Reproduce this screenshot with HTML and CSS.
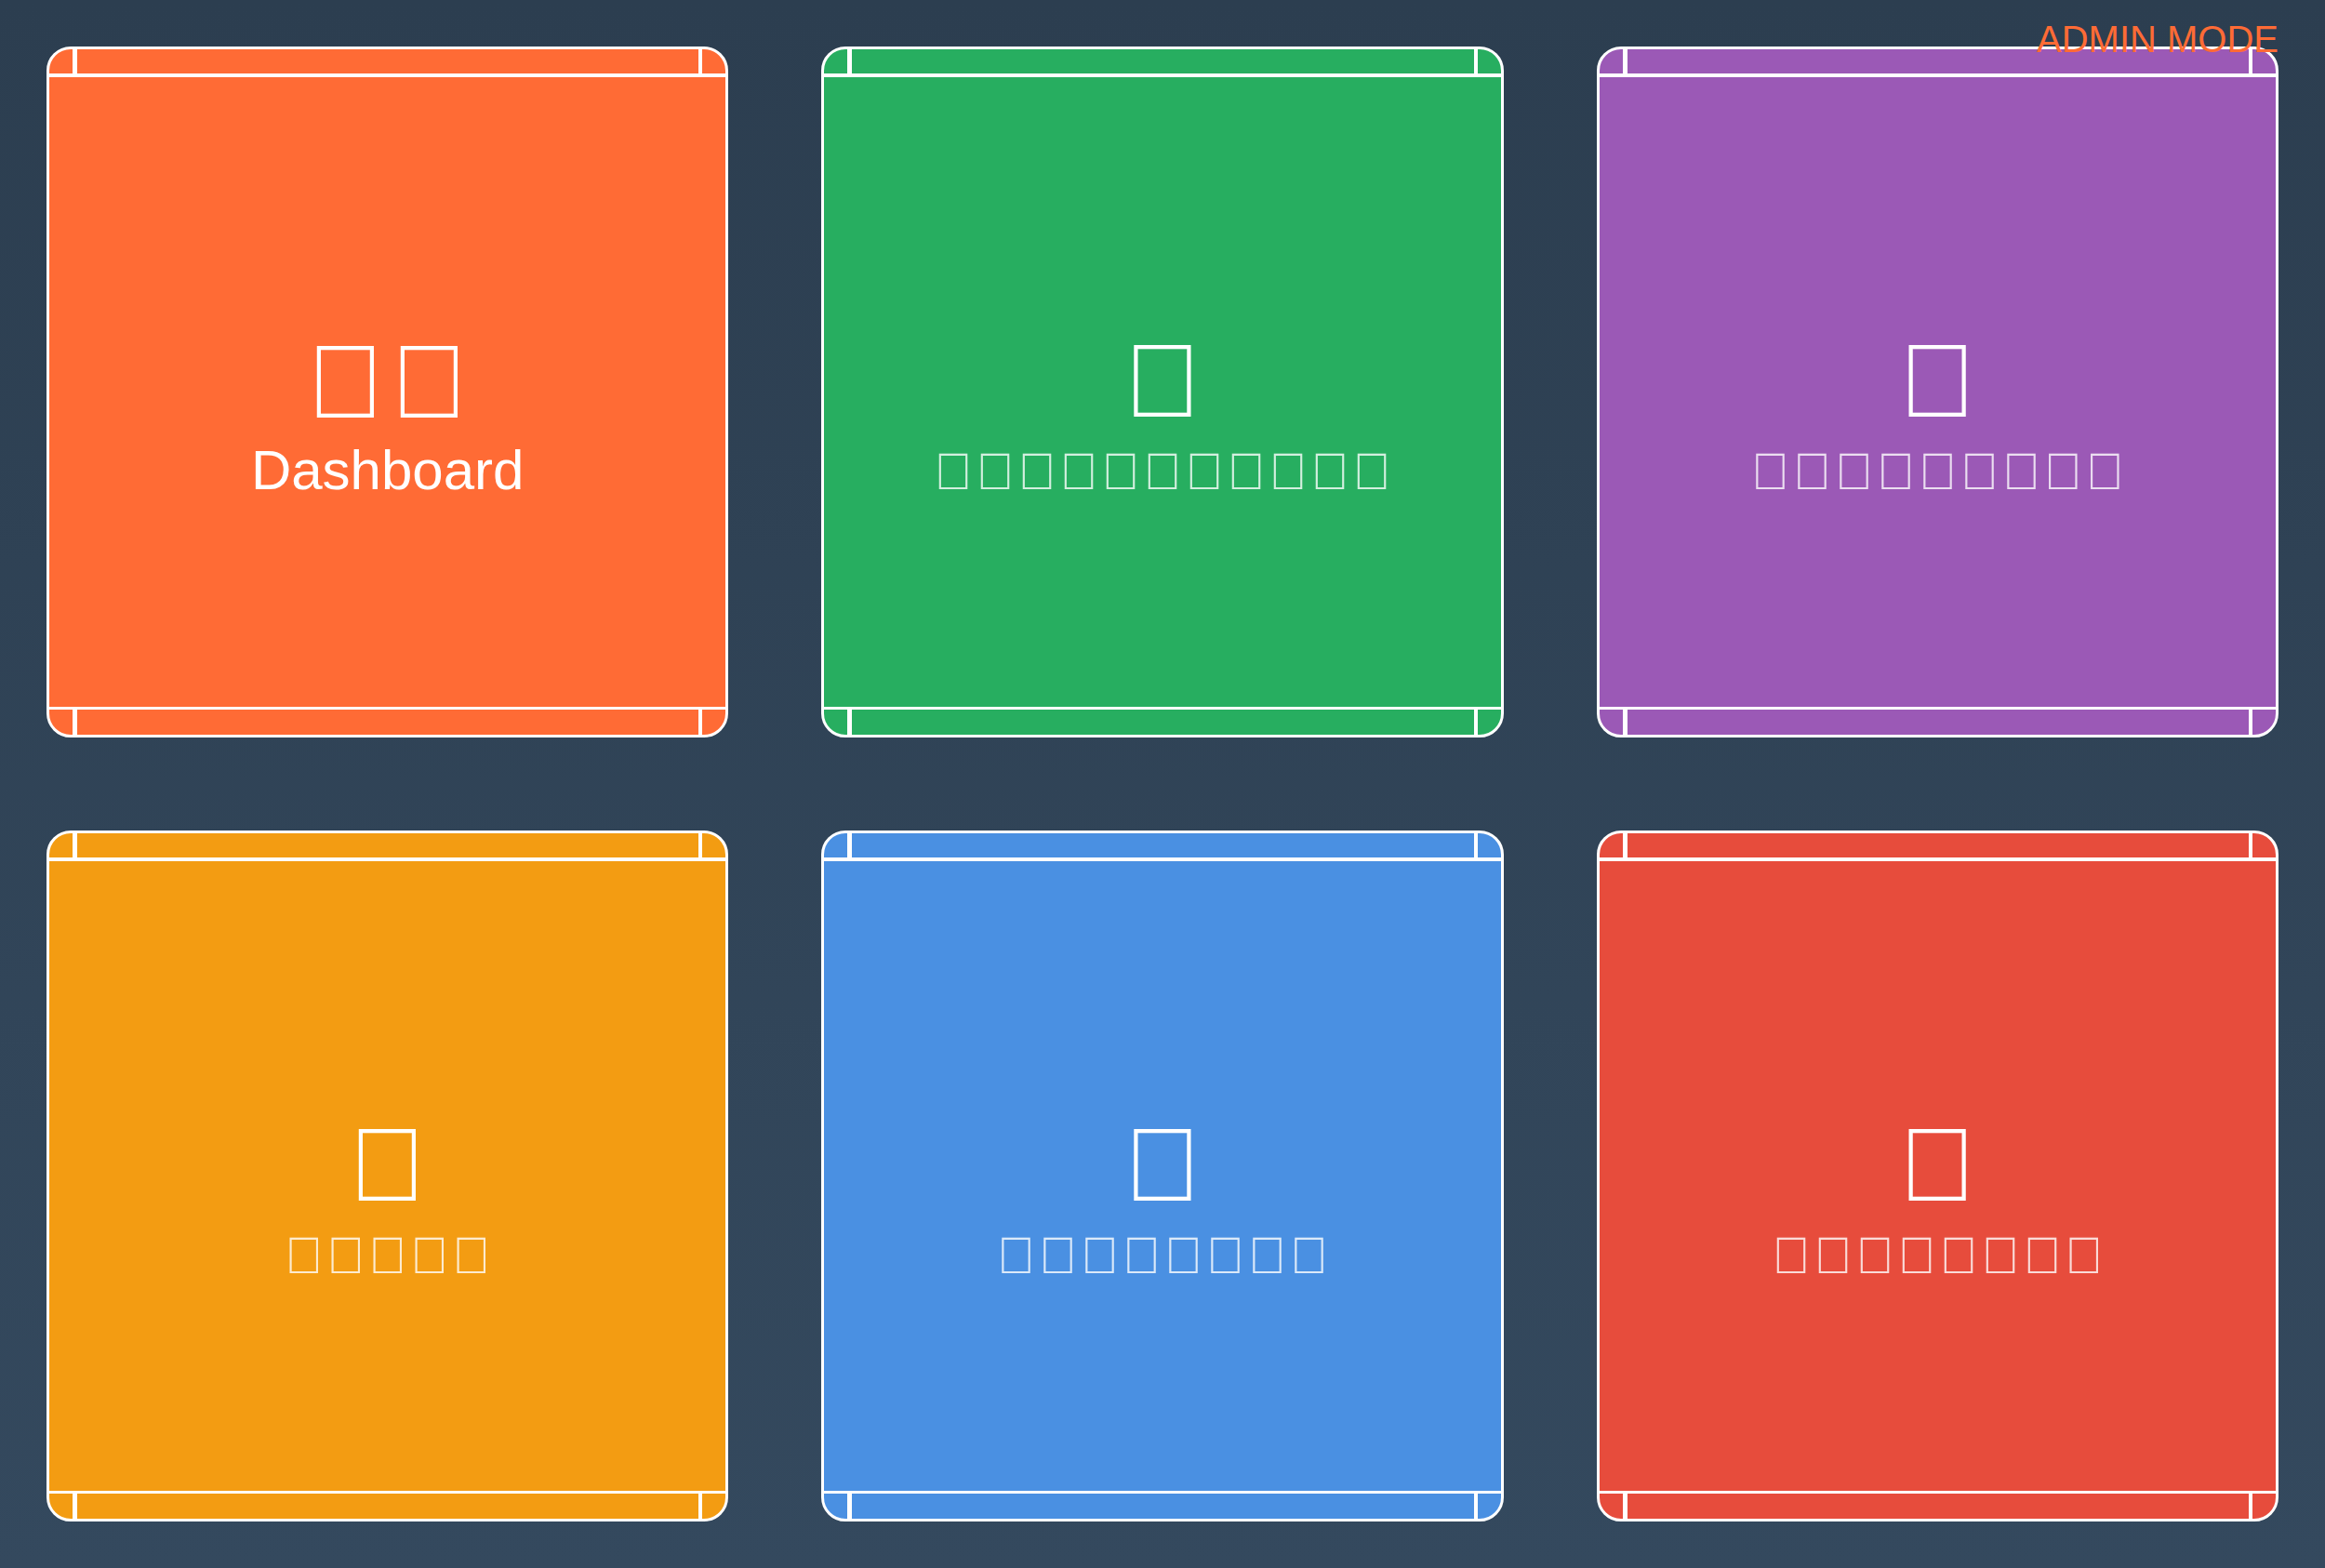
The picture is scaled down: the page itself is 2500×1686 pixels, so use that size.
FILE: index.html
```html
<!DOCTYPE html>
<html lang="en">
<head>
<meta charset="utf-8">
<title>Admin Tiles</title>
<link rel="stylesheet" href="styles.css">
</head>
<body>
<div class="board">
  <div class="tile tile-orange">
    <div class="strip strip-top"><span class="corner corner-l"></span><span class="strip-mid"></span><span class="corner corner-r"></span></div>
    <div class="tile-body"><div class="tile-icon">&#xF0E4;&#xF080;</div><div class="tile-label">Dashboard</div></div>
    <div class="strip strip-bottom"><span class="corner corner-l"></span><span class="strip-mid"></span><span class="corner corner-r"></span></div>
  </div>
  <div class="tile tile-green">
    <div class="strip strip-top"><span class="corner corner-l"></span><span class="strip-mid"></span><span class="corner corner-r"></span></div>
    <div class="tile-body"><div class="tile-icon">&#xF0C0;</div><div class="tile-label tile-label-glyphs">&#xE101;&#xE102;&#xE103;&#xE104;&#xE105;&#xE106;&#xE107;&#xE108;&#xE109;&#xE10A;&#xE10B;</div></div>
    <div class="strip strip-bottom"><span class="corner corner-l"></span><span class="strip-mid"></span><span class="corner corner-r"></span></div>
  </div>
  <div class="tile tile-purple">
    <div class="strip strip-top"><span class="corner corner-l"></span><span class="strip-mid"></span><span class="corner corner-r"></span></div>
    <div class="tile-body"><div class="tile-icon">&#xF201;</div><div class="tile-label tile-label-glyphs">&#xE201;&#xE202;&#xE203;&#xE204;&#xE205;&#xE206;&#xE207;&#xE208;&#xE209;</div></div>
    <div class="strip strip-bottom"><span class="corner corner-l"></span><span class="strip-mid"></span><span class="corner corner-r"></span></div>
  </div>
  <div class="tile tile-amber">
    <div class="strip strip-top"><span class="corner corner-l"></span><span class="strip-mid"></span><span class="corner corner-r"></span></div>
    <div class="tile-body"><div class="tile-icon">&#xF013;</div><div class="tile-label tile-label-glyphs">&#xE301;&#xE302;&#xE303;&#xE304;&#xE305;</div></div>
    <div class="strip strip-bottom"><span class="corner corner-l"></span><span class="strip-mid"></span><span class="corner corner-r"></span></div>
  </div>
  <div class="tile tile-blue">
    <div class="strip strip-top"><span class="corner corner-l"></span><span class="strip-mid"></span><span class="corner corner-r"></span></div>
    <div class="tile-body"><div class="tile-icon">&#xF07B;</div><div class="tile-label tile-label-glyphs">&#xE401;&#xE402;&#xE403;&#xE404;&#xE405;&#xE406;&#xE407;&#xE408;</div></div>
    <div class="strip strip-bottom"><span class="corner corner-l"></span><span class="strip-mid"></span><span class="corner corner-r"></span></div>
  </div>
  <div class="tile tile-red">
    <div class="strip strip-top"><span class="corner corner-l"></span><span class="strip-mid"></span><span class="corner corner-r"></span></div>
    <div class="tile-body"><div class="tile-icon">&#xF132;</div><div class="tile-label tile-label-glyphs">&#xE501;&#xE502;&#xE503;&#xE504;&#xE505;&#xE506;&#xE507;&#xE508;</div></div>
    <div class="strip strip-bottom"><span class="corner corner-l"></span><span class="strip-mid"></span><span class="corner corner-r"></span></div>
  </div>
</div>
<div class="admin-badge">ADMIN MODE</div>
</body>
</html>
```
FILE: styles.css
```css
html, body {
  margin: 0;
  height: 100%;
}

body {
  background: linear-gradient(180deg, #2c3e50 0%, #34495e 100%);
  font-family: "Liberation Sans", Arial, sans-serif;
  overflow: hidden;
  position: relative;
}

.board {
  box-sizing: border-box;
  height: 100vh;
  padding: 50px;
  display: grid;
  grid-template-columns: repeat(3, 1fr);
  grid-template-rows: repeat(2, 1fr);
  gap: 100px;
}

.tile {
  border: 3px solid #fff;
  border-radius: 26px;
  display: flex;
  flex-direction: column;
  color: #fff;
  min-height: 0;
  min-width: 0;
}

.tile-orange { background: #ff6b35; }
.tile-green { background: #27ae60; }
.tile-purple { background: #9b59b6; }
.tile-amber { background: #f39c12; }
.tile-blue { background: #4a90e2; }
.tile-red { background: #e74c3c; }

.strip {
  display: flex;
  flex: none;
}

.strip-top {
  height: 26px;
  border-bottom: 4px solid #fff;
}

.strip-bottom {
  height: 27px;
  border-top: 3px solid #fff;
}

.corner {
  width: 25px;
  flex: none;
}

.corner-l {
  border-right: 5px solid #fff;
}

.corner-r {
  border-left: 4px solid #fff;
}

.strip-mid {
  flex: 1;
}

.tile-body {
  flex: 1;
  display: flex;
  flex-direction: column;
  align-items: center;
  justify-content: center;
  padding-top: 41px;
  min-height: 0;
}

.tile-icon {
  font-size: 111.6px;
  line-height: 120px;
  letter-spacing: 6.3px;
  padding-left: 6.3px;
  padding-top: 3px;
  white-space: nowrap;
}

.tile-label {
  font-size: 60px;
  line-height: 60px;
  margin-top: 5px;
  white-space: nowrap;
}

.tile-label-glyphs {
  font-size: 55.8px;
  letter-spacing: 3.15px;
  padding-left: 3.15px;
  margin-top: 6.5px;
  color: rgba(255, 255, 255, 0.8);
}

.admin-badge {
  position: absolute;
  top: 20px;
  right: 50px;
  z-index: 10;
  color: #ff6b35;
  font-size: 40px;
  line-height: normal;
}
```
